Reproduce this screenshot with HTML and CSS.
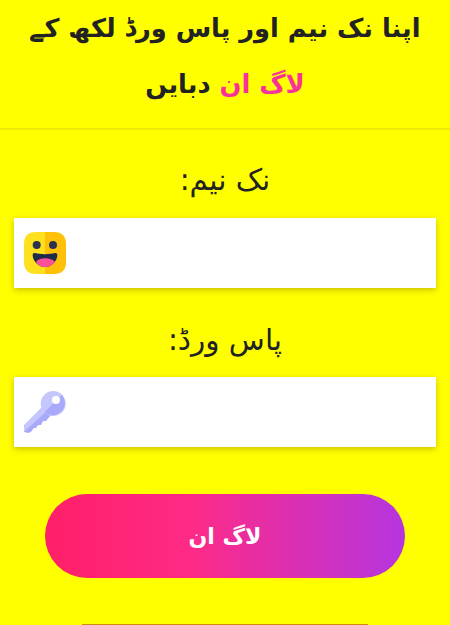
FILE: index.html
```html
<!DOCTYPE html>
<html lang="ur" dir="rtl">
<head>
<meta charset="utf-8">
<title>لاگ ان</title>
<link rel="stylesheet" href="styles.css">
</head>
<body>
<header class="intro">
  <h1 class="intro-title">اپنا نک نیم اور پاس ورڈ لکھ کے<br><span class="accent">لاگ ان</span> دبایں</h1>
</header>
<main class="form">
  <label class="label">نک نیم:</label>
  <div class="field">
    <svg class="icon" viewBox="0 0 42 42" aria-hidden="true">
      <path fill="#ffe01e" d="M21 0H12C4 0 0 4 0 12V30C0 38 4 42 12 42H21Z"/>
      <path fill="#ffc107" d="M21 0H30C38 0 42 4 42 12V30C42 38 38 42 30 42H21Z"/>
      <circle cx="12.700" cy="13" r="4" fill="#2b3350"/>
      <circle cx="29" cy="13" r="4" fill="#2b3350"/>
      <path fill="#1f2b4a" d="M11 21C16 22.500 26 22.500 31 21C33 20.500 33.500 22 33.300 24C32.500 30 27 35 21 35C15 35 9.500 30 8.700 24C8.500 22 9 20.500 11 21Z"/>
      <path fill="#ff4f9a" d="M12 30C15 25 27 25 31 30C28 33.500 25 35 21 35C17 35 14 33.500 12 30Z"/>
    </svg>
  </div>
  <label class="label">پاس ورڈ:</label>
  <div class="field">
    <svg class="icon" viewBox="0 0 42 42" aria-hidden="true">
      <path fill="#c6c6ff" d="M17.700 16.300 0 34V40.700L4.300 42 27 24Z"/>
      <path fill="#a9a9fb" d="M22 21 0 40.700 4.300 42 8 40 9 37H12L14 34H17L19 30H22L27 24Z"/>
      <circle cx="29.200" cy="12.500" r="12.500" fill="#c6c6ff"/>
      <path fill="#a9a9fb" d="M38 3.700A12.500 12.500 0 0 1 20.400 21.300Z"/>
      <circle cx="32" cy="9" r="4" fill="#fff"/>
    </svg>
  </div>
  <button class="submit" type="button">لاگ ان</button>
</main>
<div class="peek"></div>
</body>
</html>
```

FILE: styles.css
```css
html, body {
  margin: 0;
  height: 625px;
  overflow: hidden;
}
body {
  position: relative;
  background: #ffff00;
  color: #222;
  font-family: "DejaVu Sans", "Noto Sans", sans-serif;
}
.intro {
  height: 129px;
  box-sizing: border-box;
  border-bottom: 1px solid #e8e80c;
  box-shadow: 0 1px 1px rgba(180, 160, 0, 0.15);
}
.intro-title {
  margin: 0;
  font-size: 25.700px;
  font-weight: 700;
  line-height: 56px;
  text-align: center;
}
.accent {
  color: #f8329a;
}
.form {
  display: flex;
  flex-direction: column;
  padding: 0 14px;
}
.label {
  height: 89px;
  padding-top: 27px;
  box-sizing: border-box;
  font-size: 29.500px;
  line-height: 48px;
  text-align: center;
}
.field {
  height: 70px;
  background: #fff;
  box-shadow: 0 2px 6px rgba(170, 150, 0, 0.6);
  display: flex;
  align-items: center;
  direction: ltr;
  padding-left: 10px;
}
.icon {
  width: 42px;
  height: 42px;
}
.field + .label {
  padding-top: 28px;
}
.submit {
  align-self: center;
  width: 360px;
  height: 84px;
  margin-top: 47px;
  border: 0;
  border-radius: 42px;
  background: linear-gradient(90deg, #ff1f68 0%, #ff2a86 40%, #b535e0 100%);
  color: #fff;
  font-family: inherit;
  font-size: 22px;
  font-weight: 700;
}
.peek {
  position: absolute;
  left: 82px;
  bottom: 0;
  width: 286px;
  height: 1px;
  background: #d08a10;
}
```
